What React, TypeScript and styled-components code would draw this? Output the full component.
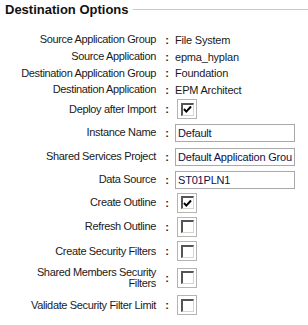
import React from "react";
import styled, { createGlobalStyle } from "styled-components";

const GlobalStyle = createGlobalStyle`
  html, body {
    margin: 0;
    padding: 0;
    background: #ffffff;
  }
  body {
    font-family: "Liberation Sans", Arial, sans-serif;
    font-size: 11px;
    color: #1a1a1a;
  }
`;

const Panel = styled.div`
  width: 308px;
  height: 325px;
  overflow: hidden;
  background: #ffffff;
`;

const Header = styled.div`
  display: flex;
  align-items: flex-start;
  gap: 4px;
  height: 31px;
  padding-left: 5px;
`;

const Title = styled.h2`
  margin: 0;
  padding-top: 2px;
  font-size: 13px;
  line-height: 15px;
  font-weight: bold;
  color: #111111;
  white-space: nowrap;
`;

const Rule = styled.div`
  flex: 1;
  height: 1px;
  margin-top: 9px;
  background: #c3cad5;
`;

const Row = styled.div<{ $h: number }>`
  display: grid;
  grid-template-columns: 156px 18px 1fr;
  align-items: center;
  height: ${(p) => p.$h}px;
`;

const Label = styled.div`
  text-align: right;
  line-height: 11px;
  letter-spacing: -0.35px;
  color: #1a1a1a;
  white-space: pre-line;
`;

const Colon = styled.span`
  text-align: center;
  font-weight: bold;
  color: #222;
  padding-left: 4px;
`;

const Value = styled.div`
  padding-left: 1px;
  letter-spacing: -0.2px;
  color: #1a1a1a;
`;

const TextBox = styled.input`
  box-sizing: border-box;
  width: 120px;
  height: 18px;
  margin: 0;
  padding: 0 2px;
  border: 1px solid #a9a9a9;
  font-family: "Liberation Sans", Arial, sans-serif;
  font-size: 11px;
  letter-spacing: -0.2px;
  color: #10104a;
  background: #ffffff;
  outline: none;
`;

const CheckFrame = styled.div`
  box-sizing: border-box;
  width: 20px;
  height: 20px;
  margin-left: 2px;
  border: 1px solid #b4b4b4;
  display: flex;
  align-items: center;
  justify-content: center;
`;

const CheckInner = styled.div`
  box-sizing: border-box;
  width: 13px;
  height: 13px;
  border-top: 2px solid #555555;
  border-left: 2px solid #555555;
  border-right: 1px solid #d8d4cc;
  border-bottom: 1px solid #d8d4cc;
  background: #ffffff;
  display: flex;
  align-items: center;
  justify-content: center;
`;

const CheckBox = ({ checked }: { checked?: boolean }) => (
  <CheckFrame>
    <CheckInner>
      {checked && (
        <svg width="9" height="9" viewBox="0 0 9 9">
          <path d="M1 4 L3.3 6.6 L8 1.5" stroke="#000" strokeWidth="2" fill="none" />
        </svg>
      )}
    </CheckInner>
  </CheckFrame>
);

type Field =
  | { label: string; h: number; kind: "text"; value: string }
  | { label: string; h: number; kind: "input"; value: string }
  | { label: string; h: number; kind: "check"; checked?: boolean };

const fields: Field[] = [
  { label: "Source Application Group", h: 17, kind: "text", value: "File System" },
  { label: "Source Application", h: 17, kind: "text", value: "epma_hyplan" },
  { label: "Destination Application Group", h: 16, kind: "text", value: "Foundation" },
  { label: "Destination Application", h: 17, kind: "text", value: "EPM Architect" },
  { label: "Deploy after Import", h: 22, kind: "check", checked: true },
  { label: "Instance Name", h: 25, kind: "input", value: "Default" },
  { label: "Shared Services Project", h: 23, kind: "input", value: "Default Application Group" },
  { label: "Data Source", h: 23, kind: "input", value: "ST01PLN1" },
  { label: "Create Outline", h: 23, kind: "check", checked: true },
  { label: "Refresh Outline", h: 25, kind: "check" },
  { label: "Create Security Filters", h: 24, kind: "check" },
  { label: "Shared Members Security\nFilters", h: 29, kind: "check" },
  { label: "Validate Security Filter Limit", h: 26, kind: "check" },
];

export default function App() {
  return (
    <Panel>
      <GlobalStyle />
      <Header>
        <Title>Destination Options</Title>
        <Rule />
      </Header>
      {fields.map((f) => (
        <Row key={f.label} $h={f.h}>
          <Label>{f.label}</Label>
          <Colon>:</Colon>
          <Value>
            {f.kind === "text" && f.value}
            {f.kind === "input" && <TextBox defaultValue={f.value} readOnly />}
            {f.kind === "check" && <CheckBox checked={f.checked} />}
          </Value>
        </Row>
      ))}
    </Panel>
  );
}
